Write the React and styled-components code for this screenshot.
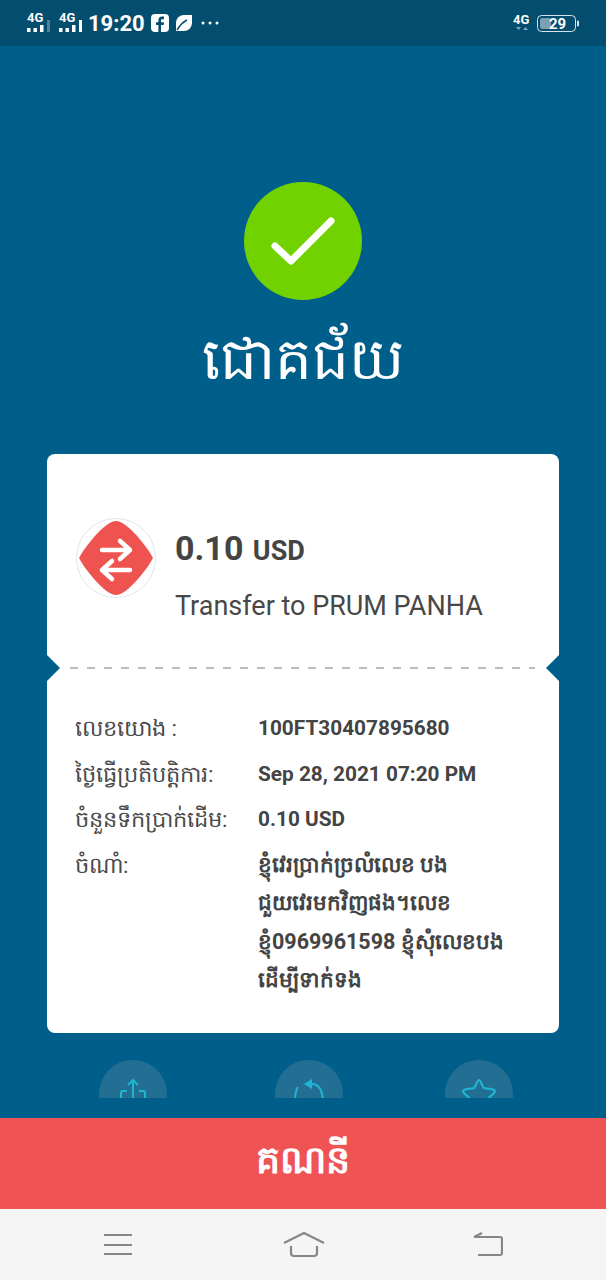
import React from 'react';
import styled, { createGlobalStyle } from 'styled-components';

const Global = createGlobalStyle`
  html, body { margin: 0; padding: 0; }
  body { background: #005e8a; font-family: Roboto, "Noto Sans", "DejaVu Sans", sans-serif; }
`;

const Screen = styled.div`
  width: 606px;
  height: 1280px;
  display: flex;
  flex-direction: column;
  background: #005e8a;
  overflow: hidden;
`;

const StatusBar = styled.div`
  height: 46px;
  flex: none;
  box-sizing: border-box;
  padding: 0 27px 0 26px;
  display: flex;
  align-items: center;
  justify-content: space-between;
  background: #034d6e;
  color: #fff;
`;

const StatusGroup = styled.div`
  display: flex;
  align-items: center;
  gap: ${(p) => p.$gap || 6}px;
`;

const Clock = styled.span`
  font-size: 22px;
  font-weight: 700;
  margin-left: -2px;
`;

const Main = styled.main`
  flex: 1;
  min-height: 0;
  display: flex;
  flex-direction: column;
  align-items: center;
  padding-top: 136px;
`;

const SuccessBadge = styled.div`
  width: 118px;
  height: 118px;
  border-radius: 50%;
  background: #72d200;
  display: flex;
  align-items: center;
  justify-content: center;
`;

const Title = styled.h1`
  margin: 16px 0 0;
  height: 86px;
  line-height: 86px;
  font-size: 58px;
  font-weight: 400;
  color: #fff;
  white-space: nowrap;
`;

const Card = styled.section`
  position: relative;
  box-sizing: border-box;
  margin-top: 52px;
  width: 512px;
  height: 579px;
  background: #fff;
  border-radius: 8px;
  color: #404040;
`;

const Summary = styled.div`
  height: 213px;
  box-sizing: border-box;
  padding: 64px 0 0 29px;
  display: flex;
  gap: 19px;
`;

const LogoRing = styled.div`
  width: 80px;
  height: 80px;
  flex: none;
  box-sizing: border-box;
  border: 1.5px solid #e2e4e6;
  border-radius: 50%;
  display: flex;
  align-items: center;
  justify-content: center;
`;

const Amount = styled.div`
  font-size: 34px;
  line-height: 40px;
  font-weight: 700;
  color: #444;
  margin-top: 10px;
  span { font-size: 27px; margin-left: 1px; }
`;

const Payee = styled.div`
  margin-top: 19px;
  font-size: 27px;
  line-height: 32px;
  color: #484848;
`;

const Tear = styled.div`
  margin: 0 24px 0 23px;
  height: 2px;
  background: repeating-linear-gradient(90deg, #bcbcbc 0 8px, transparent 8px 17px);
`;

const Notch = styled.div`
  position: absolute;
  top: 201px;
  ${(p) => (p.$right ? 'right: 0;' : 'left: 0;')}
  width: 0;
  height: 0;
  border-top: 13px solid transparent;
  border-bottom: 13px solid transparent;
  ${(p) => (p.$right ? 'border-right' : 'border-left')}: 13px solid #005e8a;
`;

const Details = styled.dl`
  margin: 0;
  padding: 40px 0 0 28px;
  display: grid;
  grid-template-columns: 183px 270px;
  row-gap: 6.5px;
`;

const Label = styled.dt`
  font-size: 22.5px;
  line-height: 39px;
  color: #4a4a4a;
  white-space: nowrap;
`;

const Value = styled.dd`
  margin: 0;
  font-size: ${(p) => (p.$note ? 21.5 : 20.8)}px;
  line-height: 38.5px;
  font-weight: 700;
  color: #444;
`;

const Actions = styled.div`
  margin-top: 27px;
  height: 38px;
  width: 100%;
  overflow: hidden;
  flex: none;
`;

const ActionRow = styled.div`
  display: flex;
  padding-left: 99px;
`;

const ActionButton = styled.div`
  width: 68px;
  height: 68px;
  flex: none;
  margin-right: ${(p) => p.$gap || 0}px;
  border-radius: 50%;
  background: #236f94;
  display: flex;
  justify-content: center;
  padding-top: 18px;
  box-sizing: border-box;
`;

const PrimaryButton = styled.button`
  flex: none;
  width: 100%;
  height: 91px;
  margin: 0;
  border: 0;
  background: #f05354;
  color: #fff;
  font: 700 38px Roboto, "Noto Sans", "DejaVu Sans", sans-serif;
`;

const NavBar = styled.nav`
  flex: none;
  height: 71px;
  box-sizing: border-box;
  background: #f5f5f6;
  display: flex;
  align-items: flex-start;
  padding: 22px 0 0 103px;
`;

const NavSlot = styled.div`
  flex: none;
  margin-left: ${(p) => p.$left || 0}px;
  display: flex;
`;

function Signal({ dim }) {
  return (
    <svg width="26" height="24" viewBox="0 0 26 24" fill="#fff">
      <text x="1" y="11" fontSize="13" fontWeight="700" fontFamily="Roboto, sans-serif">4G</text>
      <rect x="1" y="17" width="3.500" height="4" />
      <rect x="7.500" y="17" width="3.500" height="4" />
      <rect x="14" y="14" width="3.500" height="7" />
      <rect x="21" y="9" width="3" height="12" opacity={dim ? 0.3 : 1} />
    </svg>
  );
}

export default function App() {
  return (
    <Screen>
      <Global />
      <StatusBar>
        <StatusGroup>
          <Signal dim />
          <Signal />
          <Clock>19:20</Clock>
          <svg width="18" height="18" viewBox="0 0 18 18">
            <rect width="18" height="18" rx="4" fill="#fff" />
            <path d="M10 18v-7h2.600l.4-2.800h-3V6.600c0-.9.3-1.400 1.500-1.400H13V2.700c-.4 0-1.200-.1-2-.1-2.100 0-3.600 1.300-3.600 3.700v1.900H5V11h2.400v7z" fill="#034d6e" />
          </svg>
          <svg width="18" height="18" viewBox="0 0 18 18">
            <path d="M9 1h8v8a8 8 0 0 1-8 8H1V9a8 8 0 0 1 8-8z" fill="#fff" />
            <path d="M2 16C5 11 8 8 12 6" stroke="#034d6e" strokeWidth="1.500" fill="none" />
          </svg>
          <svg width="20" height="4" viewBox="0 0 20 4" fill="#fff" style={{ marginLeft: 2 }}>
            <circle cx="2" cy="2" r="1.500" />
            <circle cx="9" cy="2" r="1.500" />
            <circle cx="16" cy="2" r="1.500" />
          </svg>
        </StatusGroup>
        <StatusGroup $gap={6}>
          <svg width="18" height="20" viewBox="0 0 18 20" fill="#fff">
            <text x="0" y="11" fontSize="13" fontWeight="700" fontFamily="Roboto, sans-serif">4G</text>
            <path d="M3 14h5l-2.500 3zM10 17h5l-2.500-3z" fill="#7fa6ba" />
          </svg>
          <svg width="42" height="17" viewBox="0 0 42 17">
            <rect x=".5" y=".5" width="38" height="16" rx="4" fill="none" stroke="#d5e4ec" />
            <rect x="3" y="3" width="11" height="11" rx="2" fill="#7d9fb2" />
            <text x="20.500" y="13.500" textAnchor="middle" fontSize="15" fontWeight="700" fill="#fff" fontFamily="Roboto, sans-serif">29</text>
            <rect x="40" y="5.500" width="2" height="6" rx="1" fill="#d5e4ec" />
          </svg>
        </StatusGroup>
      </StatusBar>

      <Main>
        <SuccessBadge>
          <svg width="64" height="50" viewBox="0 0 64 50" fill="none">
            <path d="M4 30l16 15L60 5" stroke="#fff" strokeWidth="7" strokeLinecap="round" strokeLinejoin="round" />
          </svg>
        </SuccessBadge>
        <Title>ជោគជ័យ</Title>

        <Card>
          <Summary>
            <LogoRing>
              <svg width="76" height="76" viewBox="0 0 76 76" fill="none">
                <path d="M38 1C44 1 52 8 60 17C66 24 72 32 75 38C72 44 66 52 60 59C52 68 44 75 38 75C32 75 24 68 16 59C10 52 4 44 1 38C4 32 10 24 16 17C24 8 32 1 38 1Z" fill="#ef5350" />
                <path d="M24 30H52M42 21l10 9-10 9" stroke="#fff" strokeWidth="4.500" strokeLinecap="round" strokeLinejoin="round" />
                <path d="M52 50H24M34 41l-10 9 10 9" stroke="#fff" strokeWidth="4.500" strokeLinecap="round" strokeLinejoin="round" />
              </svg>
            </LogoRing>
            <div>
              <Amount>0.10 <span>USD</span></Amount>
              <Payee>Transfer to PRUM PANHA</Payee>
            </div>
          </Summary>
          <Tear />
          <Notch />
          <Notch $right />
          <Details>
            <Label>លេខយោង :</Label>
            <Value>100FT30407895680</Value>
            <Label>ថ្ងៃធ្វើប្រតិបត្តិការ:</Label>
            <Value>Sep 28, 2021 07:20 PM</Value>
            <Label>ចំនួនទឹកប្រាក់ដើម:</Label>
            <Value>0.10 USD</Value>
            <Label>ចំណាំ:</Label>
            <Value $note>
              ខ្ញុំវេរប្រាក់ច្រលំលេខ បង<br />
              ជួយវេរមកវិញផង។លេខ<br />
              ខ្ញុំ0969961598 ខ្ញុំសុំលេខបង<br />
              ដើម្បីទាក់ទង
            </Value>
          </Details>
        </Card>

        <Actions>
          <ActionRow>
            <ActionButton $gap={108}>
              <svg width="28" height="30" viewBox="0 0 28 30" fill="none" stroke="#1fb6d4" strokeWidth="2">
                <path d="M14 24V2M9 7l5-5 5 5M8 13H4q-2 0-2 2v12M20 13h4q2 0 2 2v12" />
              </svg>
            </ActionButton>
            <ActionButton $gap={102}>
              <svg width="32" height="30" viewBox="0 0 32 30" fill="none" stroke="#1fb6d4" strokeWidth="2">
                <path d="M19 6C26 6 30 13 30 24M2 24C2 15 3 12 5 9" />
                <path d="M11 6l8-5v10z" fill="#1fb6d4" stroke="none" />
              </svg>
            </ActionButton>
            <ActionButton>
              <svg width="34" height="30" viewBox="0 0 34 30" fill="none" stroke="#1fb6d4" strokeWidth="2.200" strokeLinejoin="round">
                <path d="M17 2C19 2 20 9 22 10C24 11 32 10 33 13C33 16 27 18 26 21L27 30L17 26L7 30L8 21C7 18 1 16 1 13C2 10 10 11 12 10C14 9 15 2 17 2Z" />
              </svg>
            </ActionButton>
          </ActionRow>
        </Actions>
      </Main>

      <PrimaryButton>គណនី</PrimaryButton>

      <NavBar>
        <NavSlot>
          <svg width="30" height="24" viewBox="0 0 30 24" stroke="#878787" strokeWidth="2.200" fill="none">
            <path d="M1 4h28M1 14h28M1 23h28" />
          </svg>
        </NavSlot>
        <NavSlot $left={150}>
          <svg width="42" height="27" viewBox="0 0 42 27" stroke="#878787" strokeWidth="2.200" fill="none">
            <path d="M1 12L21 2l20 10M8 15v7c0 2 1 3 3 3h20c2 0 3-1 3-3v-7" />
          </svg>
        </NavSlot>
        <NavSlot $left={148}>
          <svg width="30" height="26" viewBox="0 0 30 26" stroke="#878787" strokeWidth="2.200" fill="none">
            <path d="M1 6h26c1 0 2 1 2 2v14c0 1-1 2-2 2H5M9 2L1 6" />
          </svg>
        </NavSlot>
      </NavBar>
    </Screen>
  );
}
